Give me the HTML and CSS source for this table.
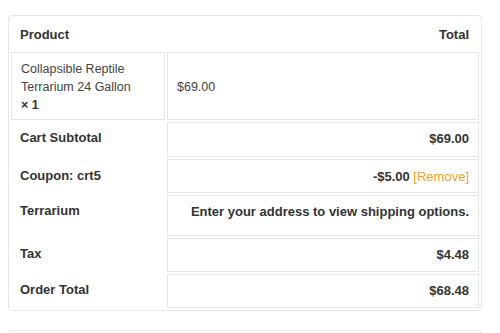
FILE: index.html
```html
<!DOCTYPE html>
<html>
<head>
<meta charset="utf-8">
<link rel="stylesheet" href="styles.css">
</head>
<body>
<div class="page">
  <div class="review">
    <table class="order">
      <thead>
        <tr class="head-row">
          <th class="col-product">Product</th>
          <th class="col-total">Total</th>
        </tr>
      </thead>
      <tbody>
        <tr class="item-row">
          <td class="item-name">Collapsible Reptile Terrarium 24 Gallon <strong class="qty">×&nbsp;1</strong></td>
          <td class="item-price">$69.00</td>
        </tr>
      </tbody>
      <tfoot>
        <tr class="sum-row row-subtotal">
          <th class="label">Cart Subtotal</th>
          <td class="value">$69.00</td>
        </tr>
        <tr class="sum-row row-coupon">
          <th class="label">Coupon: crt5</th>
          <td class="value">-$5.00 <a class="remove" href="#">[Remove]</a></td>
        </tr>
        <tr class="sum-row row-shipping">
          <th class="label">Terrarium</th>
          <td class="value">Enter your address to view shipping options.</td>
        </tr>
        <tr class="sum-row row-tax">
          <th class="label">Tax</th>
          <td class="value">$4.48</td>
        </tr>
        <tr class="sum-row row-total">
          <th class="label">Order Total</th>
          <td class="value">$68.48</td>
        </tr>
      </tfoot>
    </table>
  </div>
  <div class="next-box"></div>
</div>
</body>
</html>
```

FILE: styles.css
```css
html, body {
  margin: 0;
  padding: 0;
  background: #ffffff;
}

body {
  font-family: "Liberation Sans", Arial, sans-serif;
  color: #444444;
}

.page {
  padding: 15px 18px 0 8px;
}

.review {
  width: 474px;
  box-sizing: border-box;
  border: 1px solid #e6e6e6;
  border-radius: 4px;
}

.order {
  width: 100%;
  border-collapse: separate;
  border-spacing: 2px;
}

.order th,
.order td {
  box-sizing: border-box;
}

.head-row th {
  height: 32px;
  padding: 0 10px 0 9px;
  font-size: 13px;
  font-weight: bold;
  color: #333333;
  vertical-align: middle;
}

.col-product {
  width: 154px;
  text-align: left;
}

.col-total {
  text-align: right;
}

.item-row td {
  height: 68px;
  border: 1px solid #e6e6e6;
  font-size: 12.5px;
  color: #444444;
}

.item-name {
  padding: 7px 16px 5px 9px;
  line-height: 18px;
  vertical-align: top;
}

.qty {
  font-weight: bold;
  color: #333333;
  white-space: nowrap;
}

.item-price {
  padding: 1px 9px 0 9px;
  vertical-align: middle;
  text-align: left;
}

.sum-row th,
.sum-row td {
  vertical-align: top;
  padding-top: 8px;
  font-size: 13px;
  line-height: 15px;
}

.sum-row .label {
  text-align: left;
  padding-left: 9px;
  font-weight: bold;
  color: #333333;
}

.sum-row .value {
  border: 1px solid #e6e6e6;
  text-align: right;
  padding-right: 9px;
  font-weight: bold;
  color: #333333;
}

.row-subtotal th,
.row-subtotal td {
  height: 35px;
}

.row-coupon th,
.row-coupon td {
  height: 34px;
  padding-top: 9px;
}

.row-shipping th,
.row-shipping td {
  height: 41px;
}

.row-tax th,
.row-tax td,
.row-total th,
.row-total td {
  height: 34px;
}

.remove {
  font-weight: normal;
  color: #f5a020;
  text-decoration: none;
}

.next-box {
  width: 474px;
  height: 10px;
  margin-top: 19px;
  box-sizing: border-box;
  border: 1px solid #ececec;
  border-bottom: none;
  border-radius: 4px 4px 0 0;
}
```
